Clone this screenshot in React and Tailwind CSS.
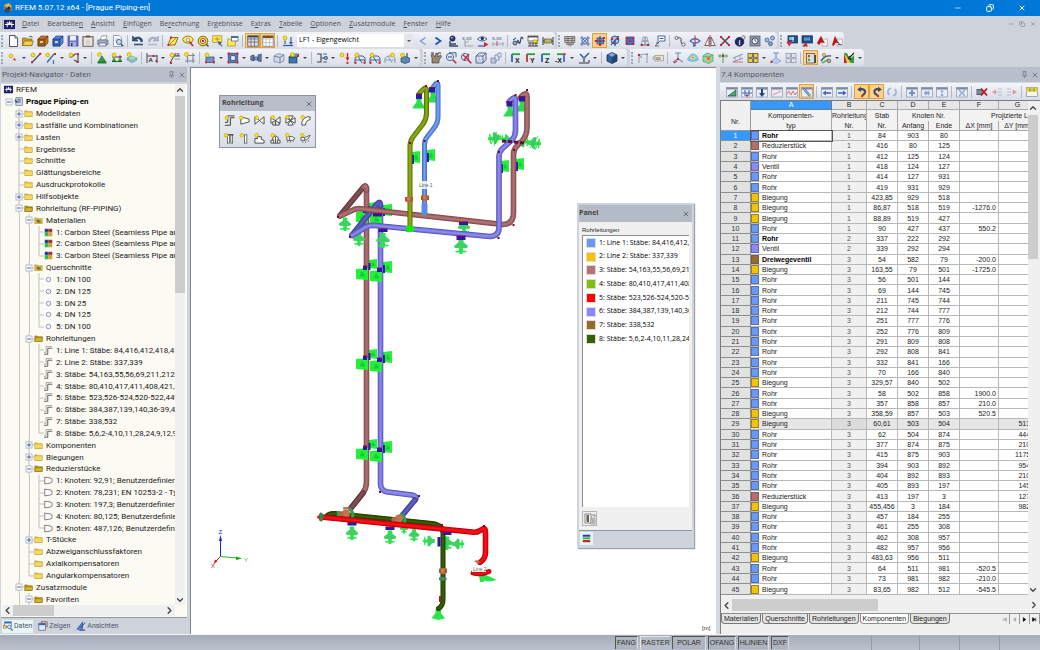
import React from "react";
import { Pin, X, Minus, Copy, ChevronLeft, ChevronRight, ChevronUp, ChevronDown } from "lucide-react";

/* ---------- drawing helpers for 12x12 icons ---------- */
const L = (d, c = "#333", w = 1) => <path d={d} fill="none" stroke={c} strokeWidth={w} />;
const F = (d, c, s = "none", w = 0.6) => <path d={d} fill={c} stroke={s} strokeWidth={w} />;
const R = (x, y, w, h, c, s = "none") => <rect x={x} y={y} width={w} height={h} fill={c} stroke={s} strokeWidth={0.7} />;
const C = (x, y, r, c, s = "none") => <circle cx={x} cy={y} r={r} fill={c} stroke={s} strokeWidth={0.8} />;
const Sun = (x = 3, y = 3) => C(x, y, 1.9, "#ffe326", "#c7a600");
const Red = (x, y) => R(x - 1, y - 1, 2, 2, "#d3202a");
const T = (x, y, s, c = "#333", size = 5) => (
  <text x={x} y={y} fontSize={size} fill={c} fontFamily="Liberation Sans, sans-serif" fontWeight="bold">{s}</text>
);
const axes = (label, a, b) => (
  <>{L("M2 10V2", a, 1.8)}{L("M2 2.2H10", b, 1.8)}{T(5, 10.5, label, "#222", 7)}</>
);
const sheet = (inner) => <>{R(0.5, 1.5, 11, 9.5, "#e9edf4", "#8d97a8")}{R(0.5, 1.5, 11, 2, "#7d899e")}{inner}</>;
const frame = (c = "#3f5f96") => <>{L("M1 11V6L4 4H9L11 6V11M1 8H11M4 4L8 11", c)}</>;
const hex = (x, y, c, s) => F(`M${x} ${y - 3}L${x + 3} ${y - 1.5}V${y + 2}L${x} ${y + 3.5}L${x - 3} ${y + 2}V${y - 1.5}Z`, c, s);

const ICONS = {
  new: <>{F("M2.5 .5H8L10.5 3V11.5H2.5Z", "#fff", "#444", 0.9)}{L("M8 .5V3H10.5", "#444", 0.8)}</>,
  open: <>{F("M.5 3H4.5L5.5 4H10V10.5H.5Z", "#c99a1c", "#7c5a08")}{F("M2.5 6H11.5L9.5 10.5H.5Z", "#f5d04a", "#7c5a08")}{L("M7 2Q9 .5 10.5 2.5", "#4c9c3c", 1.2)}</>,
  caseBrown: <>{F("M1 4L4 1H11V8L8 11H1Z", "#c47a2a", "#5f3205")}{F("M1 4H8V11H1Z", "#9a5a18", "#5f3205")}{R(3, 6, 3, 2, "#f0c890")}{L("M8 4L11 1", "#5f3205")}</>,
  caseBlue: <>{F("M1 4L4 1H11V8L8 11H1Z", "#5b88d8", "#122f72")}{F("M1 4H8V11H1Z", "#3560b8", "#122f72")}{R(3, 6, 3, 2, "#c6d8f6")}{L("M8 4L11 1", "#122f72")}</>,
  save: <>{R(1, 1, 10, 10, "#6b74c4", "#3d4590")}{R(3, 1, 6, 4.5, "#eef0fa")}{R(3, 7, 6, 4, "#a9aee0")}{R(4, 8, 1.5, 3, "#333a7a")}</>,
  clip: <>{R(0.8, 1.5, 10.4, 10, "#b9a998", "#6c5c4c")}{R(2.2, 3, 7.6, 7.5, "#f7f4ef")}{R(4, 0.5, 4, 2, "#6c5c4c")}{L("M3.5 5H8.5M3.5 7H8.5M3.5 9H8.5", "#999", 0.7)}</>,
  print: <>{F("M3 5L5 .8H10L8.5 5Z", "#fff", "#667")}{F("M.8 5H11V9.5H.8Z", "#aab3c6", "#4d566c")}{R(2, 8, 7, 3, "#eef", "#4d566c")}{C(9.5, 6.5, 0.7, "#2a6")}</>,
  preview: <>{F("M1.5 .5H7L9.5 3V11.5H1.5Z", "#fff", "#667")}{L("M3 4H7M3 6H6", "#999", 0.7)}{C(7, 7, 2.6, "#bcd8f3", "#345c94")}{L("M9 9L11.3 11.3", "#345c94", 1.5)}</>,
  undo: <>{F("M.5 1V6H6L4 4Q8 2.5 9 7Q11 7 10.5 5Q8.5 .5 2.5 2.8Z", "#31547e", "#1f3a5c")}{L("M2 9.5H11", "#31547e", 1.6)}</>,
  redo: <>{F("M11.5 1V6H6L8 4Q4 2.5 3 7Q1 7 1.5 5Q3.5 .5 9.5 2.8Z", "#aebacb", "#8ea0b6")}{L("M1 9.5H10", "#aebacb", 1.6)}</>,
  plate: <>{F("M1 10L4 2.5H11L8 10Z", "#ffe95a", "#8a5b12", 0.9)}{L("M3 9L9 3", "#8a5b12", 0.7)}{Red(1.5, 10)}{Red(4, 2.5)}</>,
  ellipse: <>{F("M.5 4.5Q2 .8 6 1Q11 1.5 11 5Q10 9 5 8Q1 7.5.5 4.5", "#ffe95a", "#8a7412", 0.9)}{C(6, 5, 1.6, "#fff", "#888")}{L("M7.5 6.5L11 11", "#d3202a", 1.6)}</>,
  target: <>{C(6, 6, 4.8, "#ffe326", "#5a4a00")}{C(6, 6, 2.6, "#fff", "#b02020")}{Red(6, 6)}{L("M9 9L11.5 11.5", "#444", 1.2)}</>,
  selBox: <>{R(0.8, 0.8, 9, 6.5, "#ffe95a", "#a58a10")}{L("M2.5 4H8M5.2 2V6.5", "#a58a10", 0.8)}{F("M6 6L10 7.5L8.5 8.5L10.5 11L9.5 11.5L7.7 9.2L6.8 10.5Z", "#345c94")}</>,
  layer: <>{R(0.8, 4, 7.5, 7, "#ffe95a", "#a58a10")}{R(4.5, 1.5, 6.5, 4.5, "#fff", "#345c94")}{R(4.5, 1.5, 6.5, 1.4, "#345c94")}</>,
  gridDark: <>{R(0.8, 0.8, 10.4, 10.4, "#dfe4ec", "#3d4656")}{L("M4 1V11M1 4H11M1 7H11M7.5 1V11", "#65718a", 0.9)}{R(0.8, 0.8, 10.4, 1.6, "#3d4656")}</>,
  gridLight: <>{R(0.8, 0.8, 10.4, 10.4, "#fbfcfe", "#66718a")}{L("M4 1V11M1 4H11M1 7.5H11M7.5 1V11", "#b4bdcc", 0.8)}{R(0.8, 0.8, 10.4, 2.2, "#8d4c1c")}</>,
  loadNew: <>{Sun(3, 3)}{L("M1 10.5H11", "#3b5fa8", 1.3)}{L("M3 5.5V9M9 2V8", "#3b5fa8", 1.2)}{F("M7 7H11L9 10Z", "#3b5fa8")}</>,
  prev: <>{L("M8.5 2.5L3.5 6L8.5 9.5", "#7f9fd4", 1.5)}</>,
  next: <>{L("M3.5 2.5L8.5 6L3.5 9.5", "#1b57c4", 1.8)}</>,
  lamp: <>{C(5.5, 3.5, 2.6, "#28447c", "#0b1c3e")}{C(4.8, 2.8, 0.8, "#cfe0ff")}{L("M3 6V11H11M3 9H9", "#33496e", 1.4)}</>,
  valGray: <>{T(0, 4.5, "x.xx", "#7e8796", 5)}{L("M3 5V11H11", "#a1a9b8", 1.2)}{L("M3 8L7 6", "#a1a9b8")}</>,
  eye: <>{F("M.5 4Q5 -.5 10 4Q5 8 .5 4", "#fff", "#28447c", 0.9)}{C(5.3, 3.6, 1.7, "#12306e")}{L("M1 11H8", "#3e62c4", 1.3)}{F("M7 7L11.5 9.5L7 12Z", "#d3202a")}</>,
  valBeam: <>{T(0, 4.5, "x.xx", "#7e8796", 5)}{L("M1 7V11M1 9H11M11 7V11", "#a1a9b8", 1.1)}{L("M5 6V11", "#c48")}</>,
  calc: <>{C(3, 8, 2, "#9ac", "#234")}{L("M5 8Q6 2 7 8Q8 10 9 3Q10 1 11 4", "#334a70", 1.2)}{L("M1 5L4 3", "#234")}</>,
  calcTab: <>{R(1, 1, 10, 5, "#fff", "#444")}{R(1, 1, 10, 1.5, "#555")}{L("M1 8H11M1 11H11M3 8V11M6 8V11M9 8V11", "#333", 0.9)}{R(6, 5, 4, 2.5, "#ffe326", "#a58a10")}</>,
  ruler: <>{L("M1 2V10M11 2V10M1 6H11", "#333", 1)}{R(2.5, 4, 7, 4, "#ffe95a", "#555")}{L("M4 4V8M6 4V8M8 4V8", "#555", 0.7)}</>,
  ladder: <>{R(0.8, 1.5, 10, 6, "#d0c8b8", "#555")}{L("M1 3.5H11M1 5.5H11M4 1.5V7.5M8 1.5V7.5", "#555", 0.7)}{F("M3 9H9L6 12Z", "#b9a080")}{L("M2 9H10", "#555")}</>,
  snow: <>{L("M1 3H11M1 9H11M3 1V11M9 1V11", "#4f66a4", 0.8)}{C(6, 6, 2.4, "#fff", "#27479c")}{L("M4 4L8 8M8 4L4 8", "#27479c", 0.7)}</>,
  nodesA: <>{R(3, 3, 6.5, 6, "#6f96d8", "#1f3f80")}{L("M1 6H11M6 1V11", "#1f3f80")}{Red(1.8, 6)}{Red(6, 10)}{Red(6, 6)}{Red(10, 3)}</>,
  nodesB: <>{C(6, 5, 4, "#a9c3ee", "#1f3f80")}{L("M2 10L10 1M6 5V11", "#1f3f80", 1.1)}{Red(3, 4)}{Red(9, 4)}</>,
  nodesC: <>{R(2, 2, 8, 7.5, "#4d6db4", "#1f3f80")}{Red(3, 3)}{Red(9, 3)}{Red(6, 6)}{Red(3, 9)}{Red(9, 9)}</>,
  nodesD: <>{F("M2 10L4 2H8L10 10Z", "#d9dfe9", "#7d899e")}{L("M1 10H11M3 6H9M6 2V10", "#7d899e")}{Red(3, 10)}{Red(9, 10)}</>,
  tag: <>{F("M4 1H11V6H6L4 8Z", "#fff", "#345c94", 0.9)}{L("M1 11L6 6M2 8H5M1 11H5", "#566a8e", 1)}{L("M5.5 3.5H9.5", "#345c94")}</>,
  path: <>{C(2.5, 3, 1.5, "#fff", "#444")}{L("M4 3Q8 2 7 6Q6.5 8 8.5 9", "#444")}{C(9.5, 9.5, 1.6, "#fff", "#444")}</>,
  rot: <>{F("M1 6Q6 1.5 11 6Q6 10.5 1 6", "none", "#4d6db4", 1.2)}{L("M6 .5V11.5", "#c03a3a", 1.1)}{F("M4 8L7 10.5L4 12Z", "#4d6db4")}</>,
  mirror: <>{F("M5 2V10.5H.8Z", "#fff", "#444", 0.8)}{F("M7 2V10.5H11.2Z", "#fff", "#444", 0.8)}{L("M6 0V12", "#d3202a", 0.9)}</>,
  redX: <>{L("M2 2L10 10M10 2L2 10", "#4b4b4b", 1.6)}{Red(2, 2)}{Red(10, 2)}{Red(2, 10)}{Red(10, 10)}{Red(6, 6)}</>,
  info: <>{C(5.5, 6.8, 4.3, "#1b2a66", "#0c1540")}{T(4.6, 9.6, "i", "#fff", 7)}{F("M7 2.5L9 .5L11.5 2L10 4.5Z", "#e8e8f4", "#333")}</>,
  docMag: <>{R(1, 1, 10, 10, "#8b99ae", "#4b5568")}{C(6, 6, 3, "#fff", "#234")}{L("M6 4V6L7.5 7", "#234", 0.8)}</>,
  cubes: <>{C(3, 5, 2, "#a9bfe2", "#3d5f9c")}{C(8.5, 3, 2, "#a9bfe2", "#3d5f9c")}{C(6.5, 8.7, 2, "#7f9fd0", "#3d5f9c")}</>,
  photo: <>{R(2, 0.8, 9.5, 7.2, "#1f4f8c", "#0d2a50")}{R(3, 2, 5, 3, "#7db4ec")}{L("M7 2V7", "#fff", 0.8)}{F("M.5 7L2 6.3L3.2 7L4.500 6.3L6 7.3L3.2 11.5Z", "#d92c2c")}</>,
  photo2: <>{R(1, 0.8, 10.4, 7.2, "#1f4f8c", "#0d2a50")}{R(3, 2.5, 6, 3, "#5d93cc")}{F("M1 11.5L5 7L7 11.5Z", "#c02b2b")}</>,
  pdf: <>{F("M6 4H11.5V11H6Z", "#f4f4f4", "#999")}{F("M1 8L5 .8L7 5L9 8L5 7.5L3 10Z", "#c1121c")}</>,
  pdf2: <>{F("M6 4H11.5V11H6Z", "#f3f3f3", "#999")}{F("M1 10L4 .8L6.5 6L9 9L5 7.5L2.5 11Z", "#c1121c")}{L("M7 9.500H10.500", "#345c94")}</>,

  node: <>{Sun(4, 4)}{Red(7.5, 7.5)}</>,
  line: <>{L("M2 10.5L10.5 1.5", "#444", 1.1)}{Sun(3, 3)}{Red(2, 10.3)}{Red(10.3, 1.8)}</>,
  memb: <>{L("M2 10.5L9 2", "#3f6fb0", 1.5)}{Sun(2.6, 3)}{Red(10, 2)}{T(7.5, 11.5, "I", "#28447c", 6)}</>,
  poly: <>{L("M1.5 5H4L7 2H10V10L6 8", "#444", 1.1)}{Sun(3, 3)}{Red(10, 2.2)}{Red(9.5, 10)}</>,
  support: <>{Sun(3.5, 2.5)}{F("M6 4L10 10H2Z", "#2f9c48", "#16602a")}{R(1.5, 10, 9, 1.5, "#1e7a35")}</>,
  suppLine: <>{L("M1 5H11", "#444")}{Sun(3, 3)}{F("M3 5L5 9H1Z", "#2f9c48")}{F("M9 5L11 9H7Z", "#2f9c48")}{Red(9, 4.6)}{R(1, 9, 10, 1, "#16602a")}</>,
  suppSurf: <>{Sun(3, 2.5)}{F("M1 6L6 4L11 6L6 9Z", "#a9d7b2", "#6aa")}{F("M1 8L6 11L11 8V6L6 9L1 6Z", "#8fbcd4", "#6aa")}</>,
  dim: <>{L("M1 1V11M11 3V11M1 4H11", "#444", 1)}{T(2.4, 10, "A", "#222", 6)}{Red(7.5, 4)}{Red(10.5, 9)}</>,
  dim2: <>{L("M1 11L5 4H11", "#444", 1)}{Sun(3, 3)}{T(5, 4, "xx", "#555", 5)}{Red(2, 11)}{L("M6 7H11", "#888", 0.8)}</>,
  gridHash: <>{L("M3.5 1V11M9 1V11M1 3.5H11M1 9H11", "#8089a0", 1.2)}{Sun(2.5, 2.5)}</>,
  surf: <>{R(2, 5, 8, 5.5, "#6f96c4", "#28447c")}{Sun(3, 3)}{Red(10, 10.3)}{Red(2, 10.3)}</>,
  opening: <>{R(1.2, 1.2, 9.6, 9.6, "#5d7cae", "#28447c")}{R(3.8, 3.8, 4.4, 4.4, "#eef", "#28447c")}{Red(1.6, 1.6)}{Red(10.4, 1.6)}{Red(10.4, 10.4)}{Red(1.6, 10.4)}</>,
  solid: <>{F("M.8 4L4 3V9L.8 8Z", "#5b7db8", "#234")}{F("M4.5 5H7.5V8H4.5Z", "#8fa9d2", "#234")}{F("M8 3L11.2 2V9.5L8 9Z", "#5b7db8", "#234")}</>,
  box: <>{F("M1 4L5 1.5L11 3V8.5L7 11L1 9.5Z", "#cfd9e8", "#5c6f90")}{L("M1 4L7 5.5L11 3M7 5.5V11", "#5c6f90", 0.8)}</>,
  boxSun: <>{R(1, 5, 8, 6, "#3e76a8", "#1a3f66")}{F("M1 5L4 2H11L9 5Z", "#6fa3cc", "#1a3f66")}{Sun(4.5, 2.6)}{Red(10, 4)}</>,
  beams: <>{L("M1 2H5V10H1M5 6H9", "#444", 1.1)}{C(9.8, 6, 1.7, "#7fb0e4", "#28447c")}{L("M7 2H11M7 10H11", "#444", 0.8)}</>,
  loadN: <>{Sun(3, 3)}{L("M8.5 1V6", "#d3202a", 1.4)}{F("M6.5 5.5H10.5L8.5 9Z", "#d3202a")}{Red(8.5, 10.8)}</>,
  loadM: <>{frame()}{Sun(3, 3)}{Red(1.5, 10.8)}{Red(10.5, 10.8)}</>,
  loadG: <>{frame("#8fa0bc")}{Sun(8.5, 3)}</>,
  loadBox: <>{F("M2 6L6 4.5L10.5 6V10L6 11.5L2 10Z", "#5b88b8", "#234")}{Sun(3.5, 3)}{L("M8 1V5", "#28447c", 1.2)}</>,
  hand: <>{F("M2 11V6L1 3L3 2L5 5L6 1L8 1.5V5L10.5 3L11.5 4.5L9 8V11Z", "#9c8672", "#3c3026")}{L("M1 1H4M8 1H11", "#333")}</>,
  zoomWin: <>{C(5, 5, 3.6, "#dcebfb", "#28447c")}{L("M8 8L11.3 11.3", "#d3202a", 1.6)}{L("M4 .8H11V5", "#345c94", 1)}{L("M3 5H7", "#28447c")}</>,
  zoomX: <>{C(5, 5, 3.6, "#dcebfb", "#28447c")}{L("M8 8L11.3 11.3", "#d3202a", 1.6)}{L("M3 3L9 8M9 2L4 8", "#d3202a", 1.3)}</>,
  wire: <>{L("M1 4H8V11H1ZM4 1H11V8M4 1L1 4M11 1L8 4M11 8L8 11", "#4f6798", 1)}{L("M4 1V8H11M4 8L1 11", "#9aa9c6", 0.7)}</>,
  wire2: <>{F("M1 6H6V11H1Z", "#bccbe4", "#4f6798")}{F("M5 3H9V8H5Z", "#dbe4f2", "#4f6798")}{F("M8 1H11V5H8Z", "#eef", "#4f6798")}</>,
  ax: axes("X", "#2b5fd0", "#26a046"),
  ay: axes("Y", "#c63030", "#26a046"),
  az: axes("Z", "#2b5fd0", "#26a046"),
  axn: <>{T(0, 10.5, "-X", "#222", 7)}{L("M9 10V2", "#2b5fd0", 1.6)}{L("M2 2.2H8", "#26a046", 1.8)}{Red(9.5, 2)}</>,
  pick: <>{L("M1 11H11V8", "#333", 1)}{L("M2 2L6 6L11 1M6 6V10", "#31547e", 1.4)}{F("M4 5H8L6 9Z", "#4d86c8")}</>,
  globe: <><path d="M6 .5L11 3V9L6 11.5L1 9V3Z" fill="#2f5f9a" stroke="#12294a" strokeWidth="0.8" />{F("M6 6L11 3V9L6 11.5Z", "#1e4472")}{F("M2.500 2.600L6 1L9 2.600L6 4.500Z", "#8fb4dc")}</>,
  frameG: <>{L("M2 11V3L10 2V11M2 3L5 6", "#98a0b0", 1.1)}{Red(2, 3)}{C(10, 2.2, 1, "#6a8")}</>,
  label: <>{R(3, 3.5, 8.5, 5.5, "#eadfd0", "#998")}{T(4, 8, "00", "#666", 4)}{L("M.5 5H3M.5 7H3", "#999")}</>,
  isoA: <>{L("M6 1V7M3 1H9M1 10L6 7L11 10", "#6f8fc4", 1.1)}{Red(6, 7)}{L("M2 11L5 9", "#c63030", 1.2)}</>,
  rainbow: <>{F("M.5 8Q3 1.5 6 2Q10 2 11.5 8Q6 11 .5 8", "#8ac8ee", "#5aa")}{F("M3 6Q6 2 9 6Q6 8 3 6", "#f3e24c")}{F("M4.5 6Q6 4 7.5 6", "#e4583c")}</>,
  cubeG: <><path d="M1 4L5 1L11 3V9L7 11.500L1 9.500Z" fill="#a3cf9c" stroke="#4a8" strokeWidth="0.8" />{C(6.5, 6.5, 2.2, "#e7a54c")}{C(6.5, 6.5, 1.2, "#e7553c")}{L("M1 4L7 5L11 3", "#4a6", 0.8)}</>,
  cross: <>{L("M1 4H11M6 1V11", "#78b084", 1.4)}{Red(6, 3.8)}{L("M3 2V6M9 2V6", "#78b084")}</>,
  slope: <>{L("M1 10L11 6M1 6L11 2", "#8f9cb4", 1.1)}{L("M1 10L11 10", "#c66", 0.9)}{L("M3 5V9M8 3V7", "#8f9cb4", 0.8)}</>,
  four: <>{R(1, 1.5, 4.4, 3.8, "#f3cd3c", "#444")}{R(6.6, 1.5, 4.4, 3.8, "#f3cd3c", "#444")}{R(1, 6.7, 4.4, 3.8, "#f3cd3c", "#444")}{R(6.6, 6.7, 4.4, 3.8, "#f3cd3c", "#444")}</>,
  isoB: <>{L("M6 1V6M3 1H9", "#6f8fc4", 1.2)}{F("M1 9L6 6L11 9L6 11.5Z", "#b9cfee", "#6f8fc4")}{Red(1.5, 10)}</>,
  fourG: <>{R(1, 1.5, 4.4, 4, "#dce1ea", "#8a94a8")}{R(6.6, 1.5, 4.4, 4, "#dce1ea", "#8a94a8")}{R(1, 6.7, 4.4, 4, "#dce1ea", "#8a94a8")}{R(6.6, 6.7, 4.4, 4, "#dce1ea", "#8a94a8")}</>,
  result: <>{R(1.5, 1.5, 8, 9.5, "#d6dbe4", "#444")}{R(3, 3, 1.8, 2, "#c33")}{R(3, 5, 1.8, 2, "#dc3")}{R(3, 7, 1.8, 2, "#3a4")}{R(9.5, 3, 1.5, 8, "#444")}</>,
  result2: <>{L("M1 9Q5 3 11 4", "#31547e", 1.4)}{C(4, 3, 1.6, "#f3cd3c", "#985")}{L("M2 11L9 7", "#6a5", 1.5)}{C(9, 9, 1.8, "#b8a890", "#665")}</>,
  flag: <>{R(1, 1, 10, 10, "#2f9c48")}{F("M1 1V11H4Z", "#d3202a")}{F("M1 1L4 11H8Z", "#f3cd3c")}{F("M4 1H11V3L7 7Z", "#fff")}{L("M5 7L11 1M6 4L8 8", "#222", 1.1)}</>,

  t1: sheet(<>{F("M2 10L10 4V10Z", "#41b35a", "#226")}</>),
  t2: sheet(<>{L("M1 7H11M4 4V10M8 4V10", "#3e62c4", 1)}{Red(6, 9.5)}</>),
  t3: sheet(<>{L("M6 3V9", "#28447c", 2)}{F("M3 7H9L6 11Z", "#28447c")}</>),
  t4: sheet(<>{L("M2 9L10 5", "#d88", 1)}</>),
  t5: sheet(<>{L("M1 8L3 5L5 9L7 5L9 9L11 6", "#e07070", 1)}</>),
  t6: sheet(<>{L("M3 3L9 10", "#3e6ea8", 2.4)}{L("M3 3L9 10", "#dfeaf8", 0.8)}</>),
  t7: sheet(<>{L("M4 7H10", "#3e62c4", 1.6)}{F("M1.5 7L5 4.5V9.5Z", "#3e62c4")}</>),
  t8: sheet(<>{L("M2 7H8", "#3e62c4", 1.6)}{F("M10.5 7L7 4.5V9.5Z", "#3e62c4")}</>),
  t9: <>{L("M4 3.200H6Q9.500 3.500 9 6.500Q8.500 8.500 6.500 9", "#394b6c", 2.2)}{F("M5 .8L1 3.4L5 6Z", "#394b6c")}{C(6.2, 10, 1.2, "#d3202a")}</>,
  t10: <>{L("M8 3.200H6Q3 3.500 3.500 6.500Q4 8.500 6.500 9", "#394b6c", 2.2)}{F("M7 .8L11 3.4L7 6Z", "#394b6c")}{C(7, 10, 1.2, "#d3202a")}</>,
  t11: <>{L("M3 9Q0 4 5 2M9 3Q12 8 7 10", "#9fb4d6", 1.8)}</>,
  t12: sheet(<>{L("M6 4V10M3 7H9", "#6f8fd4", 2)}</>),
  t13: sheet(<>{L("M4 5L8 9M8 5L4 9M3 7H9", "#8fa6dc", 1.4)}</>),
  t14: sheet(<>{C(6, 5.5, 1.3, "#8fa6dc")}{C(6, 9, 1.3, "#8fa6dc")}</>),
  t15: sheet(<>{L("M3 4L9 10M9 4L3 10", "#8fa6dc", 1.4)}</>),
  t16: <>{R(0.5, 3, 6, 6, "#555e70")}{L("M1 5H6M1 7H6", "#ccd", 0.7)}{L("M5 2.5L11 9.5M11 2.5L5 9.5", "#b01822", 1.8)}</>,
  t17: <>{L("M5 6H11M7 3H11M7 9H11", "#b9bfca", 1.2)}{F("M1 6L5 3.5V8.5Z", "#e49494")}</>,
  t18: <>{L("M1 6H7M1 3H5M1 9H5", "#b9bfca", 1.2)}{F("M11 6L7 3.5V8.5Z", "#e49494")}</>,
  t19: <>{R(0.5, 1.5, 11, 9, "#f7f7e4", "#889")}{R(0.5, 1.5, 11, 4, "#d8d23a")}{L("M4 1.5V6M8 1.5V6", "#776", 0.8)}</>,

  p1: <>{L("M1 11.2H7V3H11.5M1 8H4V1H11.5", "#333", 1)}{Sun(3, 3)}</>,
  p2: <>{F("M2 2L11 4.5V7.5L2 10Z", "#fff", "#333", 0.9)}{Sun(2.5, 3)}</>,
  p3: <>{F("M1 2L6 6L1 10ZM11 2L6 6L11 10Z", "#fff", "#333", 0.9)}{Sun(3, 3)}</>,
  p4: <>{F("M1 3L6 6L1 9ZM11 2L6 6L11 9Z", "#fff", "#333", 0.9)}{L("M6 6V11H3V8M6 11H10V8", "#333", 0.9)}{Sun(3, 2.5)}</>,
  p5: <>{F("M1 3L6 6L1 9ZM11 3L6 6L11 9Z", "#fff", "#333", 0.9)}{F("M3 1H9L6 6ZM3 11H9L6 6Z", "#fff", "#333", 0.9)}{Sun(2.5, 2.5)}</>,
  p6: <>{F("M2 11V8Q3 3 8 2H11L11 5Q6 6 6 11Z", "#fff", "#333", 0.9)}{Sun(3, 2.5)}</>,
  p7: <>{R(4, 2, 2, 9, "#fff", "#333")}{R(7.5, 2, 2, 9, "#fff", "#333")}{L("M3.5 2H10.5", "#333")}{Sun(2.2, 2.5)}</>,
  p8: <>{R(6, 2, 2.6, 9, "#fff", "#333")}{Sun(3, 2.5)}</>,
  p9: <>{F("M1 11V6H4V4H8V7L11 8V11Z", "#fff", "#333", 0.9)}{Sun(3, 2.5)}</>,
  p10: <>{F("M1 11V8H3V5L6 3L9 5V8H11V11Z", "#fff", "#333", 0.9)}{L("M6 4V11M4 7V11M8 7V11", "#333", 0.9)}{Sun(3, 2.5)}</>,
  p11: <>{F("M2 4H8L11 6L8 8H2Z", "#fff", "#333", 0.8)}{L("M3 9V10.5M6 9V10.5M9 8V9.5M5 4V8", "#333", 0.8)}{Sun(2.5, 2.5)}</>,
  p12: <>{F("M1 5H5L11 2.5L9 6L5 8H1Z", "#fff", "#333", 0.8)}{L("M3 9V10.5M6 9V10.5M9 8V9.5M5 5V8", "#333", 0.8)}{Sun(2.5, 2.5)}</>,

  rfem: <>{R(0, 1, 12, 10, "#1b1c6b")}{L("M1 6H11M3.5 3V9M8.5 3V9", "#fff", 1)}{F("M4 6H8L6 2Z", "#fff")}</>,
  folder: <>{F("M1 2.5H4.5L5.5 3.5H11V10H1Z", "#e9bd2c", "#9a7a14")}{R(1.5, 4.6, 9, 4.8, "#f8d95c")}</>,
  folderOpen: <>{F("M1 2.5H4.5L5.5 3.5H11V10H1Z", "#b9930f", "#7c620a")}{F("M2 5H11.5L10.5 10H1Z", "#dbb32a", "#7c620a")}</>,
  folderMat: <>{F("M1 2.5H4.5L5.5 3.5H11V10H1Z", "#e9bd2c", "#9a7a14")}{C(6, 7, 2, "#d8432e")}{R(6, 6, 3, 3, "#3a9c48")}{R(3.4, 5, 2, 2.4, "#3a5cc8")}</>,
  mat: <>{R(1, 1, 5, 5, "#3456b8")}{R(6, 1, 5, 5, "#c03c34")}{R(1, 6, 5, 5, "#28c046")}{R(6, 6, 5, 5, "#d8a02c")}{L("M1 3H11M3 1V6", "#222", 0.6)}</>,
  ring: <>{R(0, 0, 12, 12, "#fff")}{C(6, 6, 3, "#fff", "#3c4a8c")}</>,
  pipe: <>{L("M0 11H5V3H11", "#333", 1)}{L("M0 8.5H2.8V.8H11", "#777", 0.8)}</>,
  cone: <>{F("M1 1.5L8 2.5Q11 3 11 6Q11 9 8 9.5L1 10.5Z", "#fff", "#444", 0.9)}</>,
  doc: <>{R(2.5, 1, 8.5, 10, "#cfd9ea", "#33486e")}{L("M4 3H9M5 5H9M5 7H9", "#33486e", 0.9)}{F("M.5 3L6 6.5L2.5 8Z", "#28447c")}</>,
  data: <>{R(2, 1, 8, 6, "#fff", "#36c")}{R(2, 1, 8, 2, "#36c")}{C(7.5, 7, 2.2, "#cfe4fa", "#345c94")}{L("M9 9L11.5 11.5", "#345c94", 1.3)}{R(0.5, 5, 3.5, 3.5, "#f3cd3c", "#975")}</>,
  show: <>{R(1, 3, 8, 8, "#dfe9f8", "#28447c")}{R(1, 3, 8, 2, "#3560b8")}{L("M4 3V1H11V7H9", "#8a4a3a", 1)}</>,
  views: <>{F("M1 10L8 1V10Z", "#5a82d8", "#1f3f90")}{L("M5 8L11 2M4 11H11", "#1f3f90", 1.2)}</>,
  bars: <>{R(1, 1, 10, 2.6, "#2a34c4")}{R(1, 4.4, 10, 2.6, "#2fbf3c")}{R(1, 8, 10, 3, "#c42a34")}</>,
  panelIco: <>{R(1, 1, 6, 9, "#fff", "#555")}{R(2.5, 2, 2.5, 7, "#6a5a48")}{R(7, 5, 4, 6, "#ddd", "#888")}{L("M8 2H11V4M8 7H10M8 9H10", "#555", 0.7)}</>,
};

function Icon({ name, className = "size-3" }) {
  return <svg viewBox="0 0 12 12" className={`block shrink-0 ${className}`} aria-hidden="true">{ICONS[name]}</svg>;
}

/* ---------- toolbars ---------- */
function ToolButton({ name, active }) {
  return (
    <button
      type="button"
      aria-label={name}
      className={`flex h-[15px] w-[15px] shrink-0 items-center justify-center ${active ? "border border-[#e0a040] bg-[#ffd289]" : ""}`}
    >
      <Icon name={name} />
    </button>
  );
}

function Tools({ items }) {
  return items.split(" ").map((it, i) => {
    if (it === "|") return <span key={i} className="flex w-[5px] shrink-0 justify-center"><span className="h-3 w-px bg-[#b3bac8]" /></span>;
    if (it === "v")
      return (
        <button key={i} type="button" aria-label="Mehr" className="flex w-2 shrink-0 items-center justify-center">
          <svg viewBox="0 0 4 2" className="h-[2px] w-1"><path d="M0 0H4L2 2Z" fill="#444" /></svg>
        </button>
      );
    const active = it.startsWith("*");
    return <ToolButton key={i} name={active ? it.slice(1) : it} active={active} />;
  });
}

function Strip({ children, className = "" }) {
  return (
    <div role="toolbar" className={`flex h-full shrink-0 items-center rounded-r-sm bg-linear-to-b from-[#f1f3f8] to-[#d9dde7] ${className}`}>
      <span className="mr-[2px] ml-px flex h-3 w-[2px] shrink-0 flex-col justify-between border-l-2 border-dotted border-[#9fa7b6]" />
      {children}
    </div>
  );
}

/* ---------- navigator tree: label, depth, node kind, icon ---------- */
const TREE = [
  ["RFEM", 0, "", "rfem"],
  ["Prague Piping-en", 1, "-", "doc"],
  ["Modelldaten", 2, "+", "folder"],
  ["Lastfälle und Kombinationen", 2, "+", "folder"],
  ["Lasten", 2, "+", "folder"],
  ["Ergebnisse", 2, "t", "folder"],
  ["Schnitte", 2, "t", "folder"],
  ["Glättungsbereiche", 2, "t", "folder"],
  ["Ausdruckprotokolle", 2, "t", "folder"],
  ["Hilfsobjekte", 2, "+", "folder"],
  ["Rohrleitung (RF-PIPING)", 2, "-", "folderOpen"],
  ["Materialien", 3, "-", "folderMat"],
  ["1: Carbon Steel (Seamless Pipe and Tube)", 4, "t", "mat"],
  ["2: Carbon Steel (Seamless Pipe and Tube)", 4, "t", "mat"],
  ["3: Carbon Steel (Seamless Pipe and Tube)", 4, "e", "mat"],
  ["Querschnitte", 3, "-", "folderMat"],
  ["1: DN 100", 4, "t", "ring"],
  ["2: DN 125", 4, "t", "ring"],
  ["3: DN 25", 4, "t", "ring"],
  ["4: DN 125", 4, "t", "ring"],
  ["5: DN 100", 4, "e", "ring"],
  ["Rohrleitungen", 3, "-", "folderOpen"],
  ["1: Line 1: Stäbe: 84,416,412,418,414", 4, "t", "pipe"],
  ["2: Line 2: Stäbe: 337,339", 4, "t", "pipe"],
  ["3: Stäbe: 54,163,55,56,69,211,212,251", 4, "t", "pipe"],
  ["4: Stäbe: 80,410,417,411,408,421,422", 4, "t", "pipe"],
  ["5: Stäbe: 523,526-524,520-522,449", 4, "t", "pipe"],
  ["6: Stäbe: 384,387,139,140,36-39,41", 4, "t", "pipe"],
  ["7: Stäbe: 338,532", 4, "t", "pipe"],
  ["8: Stäbe: 5,6,2-4,10,11,28,24,9,12,95", 4, "e", "pipe"],
  ["Komponenten", 3, "+", "folder"],
  ["Biegungen", 3, "+", "folder"],
  ["Reduzierstücke", 3, "-", "folderOpen"],
  ["1: Knoten: 92,91; Benutzerdefiniert", 4, "t", "cone"],
  ["2: Knoten: 78,231; EN 10253-2 - Typ", 4, "t", "cone"],
  ["3: Knoten: 197,3; Benutzerdefiniert", 4, "t", "cone"],
  ["4: Knoten: 80,125; Benutzerdefiniert", 4, "t", "cone"],
  ["5: Knoten: 487,126; Benutzerdefiniert", 4, "e", "cone"],
  ["T-Stücke", 3, "+", "folder"],
  ["Abzweiganschlussfaktoren", 3, "t", "folder"],
  ["Axialkompensatoren", 3, "t", "folder"],
  ["Angularkompensatoren", 3, "e", "folder"],
  ["Zusatzmodule", 2, "-", "folderOpen"],
  ["Favoriten", 3, "-", "folderOpen"],
];

function Guide({ on }) {
  return <span className="flex w-[10px] shrink-0 justify-center self-stretch">{on && <span className="w-px bg-[#c4c4be]" />}</span>;
}

function Branch({ kind, level }) {
  const box = kind === "+" || kind === "-";
  return (
    <svg viewBox="0 0 10 12" className="h-3 w-[10px] shrink-0" aria-hidden="true">
      <path d={level === 1 ? "M5 6H10" : kind === "e" ? "M5 0V6H10" : "M5 0V12M5 6H10"} fill="none" stroke="#c0c0ba" />
      {box && <rect x="2" y="3" width="6" height="6" fill="#fff" stroke="#a4aebf" strokeWidth="0.8" />}
      {box && <path d={kind === "+" ? "M3 6H7M5 4V8" : "M3 6H7"} stroke="#4a639c" strokeWidth="1" />}
    </svg>
  );
}

function Navigator() {
  return (
    <aside className="flex w-[190px] shrink-0 flex-col bg-[#cfd3dc] pr-[3px] pl-px">
      <DockTitle>Projekt-Navigator - Daten</DockTitle>
      <div className="mt-[2px] flex min-h-0 flex-1 flex-col border-b border-[#8f96a3] bg-[#fcfbf3] pl-px">
        <div className="flex min-h-0 flex-1">
          <ul className="flex min-w-0 flex-1 flex-col overflow-hidden text-[8px] text-[#222]">
            {TREE.map(([label, depth, kind, icon], i) => (
              <li key={i} className="flex min-h-0 flex-1 items-center pl-[2px] whitespace-nowrap">
                {depth > 1 && <Guide />}
                {depth > 2 && <Guide on />}
                {depth > 3 && <Guide on />}
                {depth > 0 && <Branch kind={kind} level={depth} />}
                <Icon name={icon} className="mr-[3px] size-[9px]" />
                <span className={`leading-[11px] ${depth === 1 ? "font-bold text-black" : ""}`}>{label}</span>
              </li>
            ))}
          </ul>
          <div className="mr-[2px] flex w-[10px] shrink-0 flex-col items-center bg-[#f0f0f0]">
            <ChevronUp className="my-px size-[10px] text-[#444]" strokeWidth={3} />
            <div className="h-[197px] w-full bg-[#cdcdcd]" />
            <ChevronDown className="mt-auto size-[10px] text-[#444]" strokeWidth={3} />
          </div>
        </div>
        <div className="mr-3 mb-px flex h-[11px] items-center bg-[#f0f0f0]">
          <ChevronLeft className="size-[11px] text-[#444]" strokeWidth={3} />
          <div className="h-full w-[41px] bg-[#cdcdcd]" />
          <ChevronRight className="ml-auto size-[11px] text-[#444]" strokeWidth={3} />
        </div>
      </div>
      <div role="tablist" className="flex h-4 items-center gap-1 px-px text-[7px] text-[#4b5467]">
        <button role="tab" aria-selected="true" type="button" className="flex h-[13px] items-center gap-px bg-[#e9f4f6] px-px">
          <Icon name="data" className="size-[10px]" />Daten
        </button>
        <button role="tab" type="button" className="flex items-center gap-px px-px"><Icon name="show" className="size-[10px]" />Zeigen</button>
        <button role="tab" type="button" className="flex items-center gap-px px-px"><Icon name="views" className="size-[10px]" />Ansichten</button>
      </div>
    </aside>
  );
}

function DockTitle({ children }) {
  return (
    <div className="flex h-[15px] shrink-0 items-center bg-[#b9bfca] px-px text-[8px] text-[#555b66]">
      <span className="flex-1 truncate">{children}</span>
      <button type="button" aria-label="Anheften" className="mr-[3px]"><Pin className="size-[7px]" /></button>
      <button type="button" aria-label="Schließen"><X className="size-2" /></button>
    </div>
  );
}

/* ---------- 3D model ---------- */
const Pipe = ({ d, dark, mid, light, w = 5.6 }) => (
  <g fill="none" strokeLinecap="round" strokeLinejoin="round">
    <path d={d} stroke={dark} strokeWidth={w} />
    <path d={d} stroke={mid} strokeWidth={w * 0.76} />
    <path d={d} stroke={light} strokeWidth={w * 0.32} />
  </g>
);

const Foot = ({ x, y, r = 0, s = 1 }) => (
  <g transform={`translate(${x} ${y}) rotate(${r}) scale(${s})`}>
    <path d="M-2.500-6H2.500V-2.500L6.500 .5V2.500L2 3V5.500L6 6L5 7.200L1.500 7.500V9H-1.500V7.500L-5 7.200L-6 6L-2 5.500V3L-6.500 2.500V.5L-2.500-2.500Z" fill="#2be44a" />
    <path d="M-6.500 1L-2.500-2.500H2.500L6.500 1L6 3H-6Z" fill="#3ed065" />
  </g>
);

const Plate = ({ x, y, w = 12, h = 12 }) => (
  <g>
    <path d={`M${x} ${y + 1}L${x + w} ${y}V${y + h}L${x} ${y + h - 1}Z`} fill="#22f03a" />
    <path d={`M${x + w / 2} ${y + h * 0.25}L${x + w * 0.8} ${y + h * 0.7}H${x + w * 0.3}Z`} fill="#12cc34" />
  </g>
);

const Clamp = ({ x, y, w = 9, h = 4 }) => (
  <g>
    <rect x={x - w / 2} y={y - h / 2} width={w} height={h} fill="#2a18a8" />
    <path d={`M${x - w / 2} ${y - h / 2}h${w}`} stroke="#8a1030" strokeWidth="1" />
  </g>
);

const Joint = ({ x, y }) => (
  <g fill="#c06a40">
    <circle cx={x} cy={y} r="3.2" />
    <rect x={x - 4} y={y - 2.5} width="2" height="4.5" fill="#a85830" />
    <rect x={x + 2} y={y - 2.5} width="2" height="4.5" fill="#a85830" />
    <circle cx={x - 0.7} cy={y - 0.8} r="1.2" fill="#d4845c" />
  </g>
);

const BR = { dark: "#7c4a4e", mid: "#9a5d60", light: "#b07274" };
const BRD = { dark: "#5e3638", mid: "#74444a", light: "#835054" };
const PU = { dark: "#5452b8", mid: "#7371d8", light: "#8c8af0" };
const PUD = { dark: "#403e96", mid: "#5250ae", light: "#6260be" };
const NODES = [[426, 86], [438, 81], [515.5, 95], [527, 90], [410, 143], [424.5, 141], [499, 152], [514, 150], [338, 217], [350, 237], [513.5, 225], [498.5, 238], [380, 492], [419, 496], [442, 525], [484, 526]];

function Model() {
  return (
    <svg viewBox="191 68 525 566" preserveAspectRatio="xMinYMin meet" className="block h-[566px] w-[525px] shrink-0" role="img" aria-label="3D-Modell">
      {[[419, 103], [433, 97], [510, 111], [522, 106]].map(([x, y], i) => (
        <path key={i} d={`M${x - 2.5} ${y - 7}H${x + 2.5}V${y - 1}L${x + 7} ${y + 5.5}H${x - 7}L${x - 2.5} ${y - 1}Z`} fill="#2fdc4c" />
      ))}
      {[[411, 151], [426, 149], [500, 160], [515, 158]].map(([x, y], i) => (
        <g key={i}><Plate x={x + 1} y={y} w={8} h={12} /><rect x={x} y={y + 4} width="3" height="9" fill="#2a18a8" /></g>
      ))}
      <Foot x={496} y={138} r={85} s={0.9} /><Foot x={533} y={143} r={-85} s={0.9} /><Foot x={507} y={139} r={90} s={0.7} /><Foot x={522} y={142} r={-90} s={0.8} />
      <path d="M491 144L497 132M494 146L499 134M530 148L538 136M535 150L540 139" stroke="#22c83c" strokeWidth=".8" />
      {[-57, 0, 90, 180].map((o) => (
        <g key={o}>
          <Plate x={369} y={259 + o} w={8} h={10} />
          <Plate x={383} y={261 + o} w={9} h={12} />
        </g>
      ))}
      <Pipe d="M366.5 188V482Q366.5 488 363 493L351 508" {...BR} />
      <Pipe d="M363 493L351 508" {...BRD} />
      <Pipe d="M340 215.500L363.500 187" {...BRD} />
      <Pipe d="M363.500 187Q366.500 184 366.500 190" {...BR} />
      <Pipe d="M380.500 206V484Q380.500 491 388 492L412 495Q418 496 415 500" {...PU} />
      <Pipe d="M415 500L401 517" {...PUD} />
      {[-57, 0, 90, 180].map((o) => (
        <g key={o}>
          <Plate x={356} y={268 + o} />
          <Plate x={370} y={270 + o} />
          <Clamp x={365} y={268 + o} w={4} h={4} />
          <Clamp x={379.500} y={270 + o} w={5} h={4} />
          <rect x="383" y={265 + o} width="2" height="8" fill="#2a18a8" />
          <rect x="368.500" y={263 + o} width="2" height="7" fill="#2a18a8" />
        </g>
      ))}
      <Pipe d="M352 235L377 204Q380.500 200 380.500 206" {...PUD} />
      <Foot x={345} y={223} s={0.9} /><Foot x={359} y={238} s={0.9} /><Foot x={383} y={239} /><Foot x={464} y={226} s={0.9} />
      <Pipe d="M520 98Q527 90 527 97V128Q527 135 522 141L516 147Q513.500 150 513.500 155V213Q513.500 224 503 224.500L363 209Q357 208 353 210L340 216" {...BR} />
      <Foot x={461} y={245} />
      <Pipe d="M509 102Q515.500 94 515.500 101V130Q515.500 136 512 140L502 149Q499 152 499 157V228Q499 236 490 236.500L375 225.500Q370 225 366 227L352 235.500" {...PU} />
      <Pipe d="M419 94Q426.500 84 426.500 91V113Q426.500 119 423 124L413 137Q410 141 410 146V228" dark="#506a00" mid="#739200" light="#8cac14" w={5} />
      <Pipe d="M432 89Q438 79 438 86V117Q438 123 434 128L427 137Q424.500 140 424.500 145V212" dark="#3e69c0" mid="#5485dc" light="#74a2f0" w={5} />
      <rect x="421.500" y="203" width="6" height="12" rx="2" fill="#5a8ee4" />
      <rect x="406" y="226" width="8" height="6" fill="#10ea10" />
      <Joint x={409} y={199.500} /><Joint x={425} y={198} />
      <Clamp x={463.500} y={223.500} h={3} /><Clamp x={461} y={238} /><Clamp x={377.500} y={215} h={3} /><Clamp x={383} y={230.500} h={3} />
      <Clamp x={419} y={96.500} w={6} h={5} /><Clamp x={432} y={90} w={6} h={5} /><Clamp x={509.500} y={104} w={6} h={5} /><Clamp x={522} y={99} w={6} h={5} />
      <path d="M502 141L525 143" stroke="#5c1140" strokeWidth="3" strokeDasharray="4 2" />
      <rect x="418" y="181" width="14" height="8" fill="#fff" opacity=".85" />
      <text x="419" y="187" fontSize="5" fill="#555" fontFamily="Liberation Sans, sans-serif">Line 1</text>

      <Foot x={352} y={532} s={0.9} /><Foot x={390} y={536} s={0.9} /><Foot x={414} y={534} s={0.8} /><Foot x={404} y={528} s={0.6} />
      <Foot x={430} y={541} r={90} s={0.8} /><Foot x={457} y={544} r={-90} s={0.8} /><Foot x={447} y={542} s={0.9} />
      <path d="M435.500 609H441V613L445 618.500L438 620L431.500 618L435.500 613Z" fill="#2be44a" />
      <path d="M479 575H486L497 580L489 581.500L484 580.500V582H480Z" fill="#2be44a" />
      <Pipe d="M327 516Q329 513 335 513.500L432 523.500Q443 525 443 533V600Q443 606 438.500 608.500" dark="#1f3a00" mid="#2a4a02" light="#3c6208" w={5} />
      <path d="M349 509Q355 512 352 518M400 514Q407 517 404 523" fill="none" stroke="#3c9c50" strokeWidth="3" />
      <circle cx="346" cy="513.500" r="4" fill="#c07450" /><circle cx="341" cy="514" r="2.600" fill="#b06a44" /><rect x="343" y="507" width="6" height="2.500" rx="1" fill="#b87a58" />
      <circle cx="399" cy="518.500" r="4" fill="#c07450" /><circle cx="394" cy="519.500" r="2.600" fill="#b06a44" />
      <path d="M338 511V516" stroke="#3c9c50" strokeWidth="2.400" />
      <Pipe d="M321 517L472 532Q477 533 480 530.500L484 528.500Q485.500 529 485.500 533V552Q485.500 559 480 562.500" dark="#b80008" mid="#e0040c" light="#fa1018" />
      <ellipse cx="321" cy="517" rx="2.300" ry="4.500" fill="#2e8c46" /><circle cx="318.500" cy="517" r="1.500" fill="#e02020" />
      <Clamp x={352} y={524} h={3} /><Clamp x={390} y={528.500} h={3} /><Clamp x={447} y={533.500} h={3} /><Clamp x={439} y={542} w={3} h={9} />
      <Joint x={443} y={571} />
      <rect x="439" y="577" width="7.500" height="3.500" rx="1" fill="#3c8c58" />
      <path d="M440 596V602" stroke="#a02030" strokeWidth="2" />
      <Pipe d="M473 573Q480 575.500 489 571.500" dark="#b00008" mid="#d4040c" light="#ee1018" w={4.8} />
      <path d="M474 561Q478 559 480 562L478 564Z" fill="#b47450" />
      <rect x="472" y="565" width="14" height="7" fill="#fff" opacity=".9" />
      <text x="473" y="570.500" fontSize="5" fill="#666" fontFamily="Liberation Sans, sans-serif">Line 2</text>
      {NODES.map(([x, y], i) => <rect key={i} x={x - 1} y={y - 1} width="2" height="2" fill="#7c0c18" />)}

      <g fontFamily="Liberation Sans, sans-serif" fontSize="6">
        <path d="M220.500 556.500V540" stroke="#1a1aee" strokeWidth="1" /><path d="M219 541L220.500 535L222 541Z" fill="#1a1aee" />
        <path d="M220.500 556.500L237 558" stroke="#16c016" /><path d="M236 556.500L242 558.500L236 560Z" fill="#16a016" />
        <path d="M220.500 556.500L215 562" stroke="#e01616" /><path d="M217.500 561L213.500 564.500L215 559.500Z" fill="#e01616" />
        <text x="218.500" y="533.500" fill="#1a1aee">Z</text><text x="244" y="561.500" fill="#16c016">Y</text><text x="211" y="568" fill="#e01616">X</text>
      </g>
      <text x="702" y="630" fontSize="6" fill="#333" fontFamily="Liberation Sans, sans-serif">[m]</text>
    </svg>
  );
}

/* ---------- floating windows ---------- */
const LINES = [
  ["1: Line 1: Stäbe: 84,416,412,418", "bg-[#6699ff]"],
  ["2: Line 2: Stäbe: 337,339", "bg-[#f5c400]"],
  ["3: Stäbe: 54,163,55,56,69,211,212", "bg-[#bb7073]"],
  ["4: Stäbe: 80,410,417,411,408,421", "bg-[#7fbf00]"],
  ["5: Stäbe: 523,526-524,520-522", "bg-[#ff0000]"],
  ["6: Stäbe: 384,387,139,140,36-39", "bg-[#8888ff]"],
  ["7: Stäbe: 338,532", "bg-[#96692c]"],
  ["8: Stäbe: 5,6,2-4,10,11,28,24,9", "bg-[#336000]"],
];

function Palette() {
  return (
    <section className="absolute top-[27px] left-[28px] w-[97px] border border-[#8d949f] bg-linear-to-b from-[#f4f6fa] to-[#d9dde6]">
      <div className="flex h-[15px] items-center bg-[#b9bfca] pr-[2px] pl-[2px] font-['Open_Sans',sans-serif] text-[7px] font-bold text-[#444]">
        <h2 className="flex-1">Rohrleitung</h2>
        <button type="button" aria-label="Schließen"><X className="size-2" /></button>
      </div>
      <div className="grid h-9 grid-cols-6 place-items-center px-[2px]">
        {["p1", "p2", "p3", "p4", "p5", "p6", "p7", "p8", "p9", "p10", "p11", "p12"].map((n) => (
          <button key={n} type="button" aria-label={n}><Icon name={n} className="size-[11px]" /></button>
        ))}
      </div>
    </section>
  );
}

function LegendPanel() {
  return (
    <section className="absolute top-[135px] left-[386px] flex h-[345px] w-[117px] flex-col border-2 border-[#cfd4dc] bg-[#f0f0f0] shadow-[1px_1px_1px_#9aa1ab]">
      <div className="flex h-[17px] shrink-0 items-center bg-[#b5bbc6] pr-[2px] font-['Open_Sans',sans-serif] text-[7px] font-bold text-[#444]">
        <h2 className="flex-1">Panel</h2>
        <button type="button" aria-label="Schließen"><X className="size-2" /></button>
      </div>
      <div className="flex min-h-0 flex-1 flex-col px-[3px] pt-1">
        <h3 className="font-['Liberation_Sans',sans-serif] text-[6px] leading-[9px]">Rohrleitungen</h3>
        <div className="min-h-0 flex-1 overflow-hidden border-t border-l border-[#8d8d8d] bg-white">
          <ul className="flex h-[110px] flex-col">
            {LINES.map(([t, c]) => (
              <li key={t} className="flex flex-1 items-center gap-[3px] pl-[3px] font-['Open_Sans',sans-serif] text-[7px] whitespace-nowrap text-black">
                <span className={`size-[10px] shrink-0 border border-[#ddd] ${c}`} />{t}
              </li>
            ))}
          </ul>
        </div>
        <button type="button" aria-label="Optionen" className="my-1 flex size-[15px] shrink-0 items-center justify-center border border-[#b5b5b5]">
          <Icon name="panelIco" />
        </button>
      </div>
      <div className="flex h-4 shrink-0 items-center border-t border-[#8f96a3] bg-[#cfd3dc] pl-px">
        <button type="button" aria-label="Farben" className="flex size-[13px] items-center justify-center bg-[#e9f4f4]"><Icon name="bars" className="size-[9px]" /></button>
      </div>
    </section>
  );
}

/* ---------- component table ---------- */
const KIND = {
  Ro: ["Rohr", "bg-[#6699ff]"],
  Re: ["Reduzierstück", "bg-[#bb6a6e]"],
  Ve: ["Ventil", "bg-[#8888ff]"],
  Bi: ["Biegung", "bg-[#f5c400]"],
  Dr: ["Dreiwegeventil", "bg-[#96692c]"],
};
const ROWS = `Ro 1 84 903 80|Re 1 416 80 125|Ro 1 412 125 124|Ve 1 418 124 127|Ro 1 414 127 931|Ro 1 419 931 929|Bi 1 423,85 929 518|Bi 1 86,87 518 519 -1276.0|Bi 1 88,89 519 427|Ro 1 90 427 437 550.2|Ro 2 337 222 292|Ve 2 339 292 294|Dr 3 54 582 79 -200.0|Bi 3 163,55 79 501 -1725.0|Ro 3 56 501 144|Ro 3 69 144 745|Ro 3 211 745 744|Ro 3 212 744 777|Ro 3 251 777 776|Ro 3 252 776 809|Ro 3 291 809 808|Ro 3 292 808 841|Ro 3 332 841 166|Ro 3 70 166 840|Bi 3 329,57 840 502|Ro 3 58 502 858 1900.0|Ro 3 357 858 857 210.0|Bi 3 358,59 857 503 520.5|Bi 3 60,61 503 504 _ 513.0|Ro 3 62 504 874 _ 444.0|Ro 3 377 874 875 _ 210.0|Ro 3 415 875 903 _ 1175.0|Ro 3 394 903 892 _ 954.0|Ro 3 404 892 893 _ 210.0|Ro 3 405 893 197 _ 145.0|Re 3 413 197 3 _ 127.0|Bi 3 455,456 3 184 _ 982.0|Ro 3 457 184 255|Ro 3 461 255 308|Ro 3 462 308 957|Ro 3 482 957 956|Bi 3 483,63 956 511|Ro 3 64 511 981 -520.5|Ro 3 73 981 982 -210.0|Bi 3 83,65 982 512 -545.5`
  .split("|")
  .map((r) => r.split(" ").map((c) => (c === "_" ? "" : c)));
const BOLD = [1, 11, 13];

function ComponentTable() {
  const hd = "border-r border-b border-[#a9a9a9] bg-[#e6e6e6] p-0 text-center font-normal leading-[8px]";
  const h2 = "overflow-hidden border-r border-[#a9a9a9] bg-[#f2f2f2] p-0 text-center font-normal whitespace-nowrap";
  return (
    <table className="h-full w-[376px] table-fixed border-separate border-spacing-0 font-['Liberation_Sans',sans-serif] text-[7px] leading-[9px] text-[#222]">
      <colgroup>
        <col className="w-[30px]" /><col className="w-[81px]" /><col className="w-[35px]" /><col className="w-[31px]" /><col className="w-[31px]" /><col className="w-[31px]" /><col className="w-[39px]" /><col className="w-[38px]" /><col className="w-[60px]" />
      </colgroup>
      <thead>
        <tr className="h-[9px]">
          <th rowSpan={3} className="border-r border-b border-[#999] bg-[#f0f0f0] p-0 pt-3 text-center font-normal">Nr.</th>
          {"ABCDEFGH".split("").map((l) => (
            <th key={l} scope="col" className={l === "A" ? "border-r border-b border-[#777] bg-[#3399ff] p-0 text-center leading-[8px] font-normal text-white" : hd}>{l}</th>
          ))}
        </tr>
        <tr className="h-[11px]">
          <th className={h2}>Komponenten-</th><th className={h2}>Rohrleitung</th><th className={h2}>Stab</th>
          <th className={h2} colSpan={2}>Knoten Nr.</th><th className={h2} colSpan={3}>Projizierte Längen [mm]</th>
        </tr>
        <tr className="h-[10px]">
          {["typ", "Nr.", "Nr.", "Anfang", "Ende", "ΔX [mm]", "ΔY [mm]", "ΔZ [mm]"].map((t, i) => (
            <th key={i} className={`${h2} border-b`}>{t}</th>
          ))}
        </tr>
      </thead>
      <tbody>
        {ROWS.map(([k, b, c, d, e, f = "", g = ""], i) => {
          const n = i + 1;
          const cell = `border-r border-b border-[#b8b8b8] p-0 ${n === 29 ? "bg-[#e6e6e6]" : ""}`;
          return (
            <tr key={n}>
              <th scope="row" className={`border-r border-b border-[#8f8f8f] p-0 text-center font-normal ${n === 1 ? "bg-[#3399ff] text-white" : "bg-[#e2e2e2] text-[#333]"}`}>{n}</th>
              <td className={`${cell} ${n === 1 ? "outline outline-[#555]" : ""}`}>
                <div className="flex items-center gap-[3px]">
                  <span className={`h-[9px] w-2 shrink-0 border border-[#555]/60 ${KIND[k][1]}`} />
                  <span className={BOLD.includes(n) ? "font-bold text-black" : ""}>{KIND[k][0]}</span>
                </div>
              </td>
              <td className={`border-r border-b border-[#b8b8b8] p-0 text-center text-[#555] ${n === 29 ? "bg-[#dcdcdc]" : "bg-[#f0f0f0]"}`}>{b}</td>
              <td className={`${cell} text-center`}>{c}</td>
              <td className={`${cell} text-center`}>{d}</td>
              <td className={`${cell} text-center`}>{e}</td>
              <td className={`${cell} pr-[2px] text-right`}>{f}</td>
              <td className={`${cell} text-right`}>{g}</td>
              <td className={cell} />
            </tr>
          );
        })}
      </tbody>
    </table>
  );
}

function TableDock() {
  return (
    <aside className="flex w-[324px] shrink-0 flex-col bg-[#d5d9e2] pl-1">
      <DockTitle>7.4 Komponenten</DockTitle>
      <div role="toolbar" className="mt-px flex h-[17px] shrink-0 items-center bg-linear-to-b from-[#f3f5f9] to-[#d9dde7] pl-1">
        <Tools items="t1 t2 t3 t4 t5 *t6 | t7 t8 | *t9 *t10 t11 | t12 t13 t14 | t15 | t16 t17 t18 | t19" />
      </div>
      <div className="flex min-h-0 flex-1 flex-col border-t border-l border-[#7d7d7d] bg-[#f0f0f0]">
        <div className="flex min-h-0 flex-1 pr-[2px]">
          <div className="min-w-0 flex-1 overflow-hidden bg-white"><ComponentTable /></div>
          <div className="flex w-[10px] shrink-0 flex-col items-center">
            <ChevronUp className="my-[2px] size-[10px] text-[#444]" strokeWidth={3} />
            <div className="h-[144px] w-full bg-[#cdcdcd]" />
            <ChevronDown className="mt-auto size-[10px] text-[#444]" strokeWidth={3} />
          </div>
        </div>
        <div className="mt-1 flex h-3 shrink-0 items-center pr-px">
          <ChevronLeft className="size-[11px] text-[#444]" strokeWidth={3} />
          <div className="h-full w-[146px] bg-[#cdcdcd]" />
          <ChevronRight className="ml-auto size-[10px] text-[#444]" strokeWidth={3} />
        </div>
        <div className="mt-[2px] flex h-[21px] shrink-0 items-start justify-between border-t border-[#8f8f8f] font-['Liberation_Sans',sans-serif] text-[7px]">
          <div role="tablist" className="flex gap-px">
            {["Materialien", "Querschnitte", "Rohrleitungen", "Komponenten", "Biegungen"].map((t) => (
              <button
                key={t}
                role="tab"
                type="button"
                aria-selected={t === "Komponenten"}
                className={`h-[10px] rounded-b-sm border-r border-b border-l px-[2px] leading-[9px] ${t === "Komponenten" ? "border-[#8f8f8f] bg-white" : "border-[#777] bg-[#e4e4e4]"}`}
              >
                {t}
              </button>
            ))}
          </div>
          <div className="flex">
            {["M3 1V7M8 1L4 4L8 7Z", "M7 1L3 4L7 7Z", "M3 1L7 4L3 7Z", "M2 1L6 4L2 7ZM7 1V7"].map((d, i) => (
              <button key={d} type="button" aria-label={`Blatt ${i + 1}`} className="flex h-[10px] w-[10px] items-center justify-center border-r border-[#999]">
                <svg viewBox="0 0 10 8" className="h-[5px] w-[7px]"><path d={d} fill={i < 2 ? "#aaa" : "#000"} stroke={i < 2 ? "#aaa" : "#000"} /></svg>
              </button>
            ))}
          </div>
        </div>
      </div>
    </aside>
  );
}

/* ---------- frame ---------- */
const MENU = [["", "D", "atei"], ["Bearbeite", "n", ""], ["", "A", "nsicht"], ["", "E", "infügen"], ["Be", "r", "echnung"], ["Er", "g", "ebnisse"], ["E", "x", "tras"], ["", "T", "abelle"], ["", "O", "ptionen"], ["", "Z", "usatzmodule"], ["", "F", "enster"], ["", "H", "ilfe"]];

const STATUS = [["FANG", "w-[23px]"], ["RASTER", "w-[30px]"], ["POLAR", "w-[34px]"], ["OFANG", "w-[28px]"], ["HLINIEN", "w-[31px]"], ["DXF", "w-[18px]"]];

export default function App() {
  return (
    <div className="flex h-screen flex-col overflow-hidden bg-[#ced2db] font-['Roboto','Open_Sans',sans-serif] text-[8px] text-[#222]">
      <header className="flex h-4 shrink-0 items-center bg-[#0078d7] pr-[14px] pl-[2px] text-white">
        <svg viewBox="0 0 12 12" className="size-3 shrink-0" aria-hidden="true">
          <circle cx="6" cy="6" r="4.500" fill="#8c7a58" /><path d="M2 3L7 1L10 5L6 7Z" fill="#d8b64c" /><path d="M2 8L5 5L9 10L4 11Z" fill="#2f4a78" /><circle cx="7" cy="6" r="1.500" fill="#1c2c48" />
        </svg>
        <h1 className="ml-px flex-1">RFEM 5.07.12 x64 - [Prague Piping-en]</h1>
        <div className="flex items-center gap-6">
          <button type="button" aria-label="Minimieren"><Minus className="size-2" /></button>
          <button type="button" aria-label="Wiederherstellen"><Copy className="size-2 -scale-x-100" strokeWidth={3} /></button>
          <button type="button" aria-label="Schließen"><X className="size-2" strokeWidth={3} /></button>
        </div>
      </header>

      <nav className="flex h-4 shrink-0 items-center pr-1 pl-[2px] font-['Open_Sans',sans-serif] text-[7px] text-[#4b505c]">
        <span className="mr-px h-[9px] border-l border-dotted border-[#8d95a4]" />
        <Icon name="rfem" className="mr-[7px] size-[11px]" />
        <div className="flex flex-1 gap-2">
          {MENU.map(([a, u, b]) => (
            <button key={a + u + b} type="button">{a}<u>{u}</u>{b}</button>
          ))}
        </div>
        <div className="flex items-center gap-[5px] text-[#777]">
          <button type="button" aria-label="Fenster minimieren"><Minus className="size-[6px]" /></button>
          <button type="button" aria-label="Fenster wiederherstellen"><Copy className="size-[6px]" /></button>
          <button type="button" aria-label="Fenster schließen"><X className="size-[6px]" /></button>
        </div>
      </nav>

      <div className="flex h-[17px] shrink-0">
        <Strip>
          <Tools items="new open caseBrown caseBlue save clip print preview | undo redo | plate ellipse target selBox layer | *gridDark *gridLight | loadNew" />
          <div className="mx-[2px] grid h-[13px] w-[116px] shrink-0 grid-cols-[1fr_9px] items-center bg-white">
            <select aria-label="Lastfall" defaultValue="lf1" className="col-span-2 col-start-1 row-start-1 h-full w-full appearance-none pl-[2px] font-['Open_Sans',sans-serif] text-[7px] text-black">
              <option value="lf1">LF1 - Eigengewicht</option>
            </select>
            <span className="pointer-events-none col-start-2 row-start-1 flex h-full items-center justify-center bg-[#e2e5ec]">
              <svg viewBox="0 0 4 2" className="h-[2px] w-1"><path d="M0 0H4L2 2Z" fill="#555" /></svg>
            </span>
          </div>
          <Tools items="prev next lamp valGray eye valBeam | calc calcTab ruler" />
        </Strip>
        <Strip className="ml-[2px]">
          <Tools items="ladder snow *nodesA nodesB nodesC nodesD tag | path rot mirror redX info docMag cubes" />
        </Strip>
        <Strip className="ml-[2px]"><Tools items="photo photo2 pdf pdf2" /></Strip>
      </div>
      <div className="flex h-[18px] shrink-0 pb-px">
        <Strip>
          <Tools items="node v line memb v poly v | support suppLine suppSurf | dim v dim2 gridHash | surf v opening v solid v box boxSun v | beams v loadN loadM loadM loadG loadBox v" />
        </Strip>
        <Strip className="ml-[3px]">
          <Tools items="hand zoomWin zoomX wire wire2 | ax ay az axn v pick v | globe v" />
        </Strip>
        <Strip className="ml-[3px]">
          <Tools items="frameG label | isoA rainbow cubeG cross slope four v isoB fourG | *result result2 v flag v" />
        </Strip>
      </div>

      <main className="flex min-h-0 flex-1">
        <Navigator />
        <div className="relative min-w-0 flex-1 overflow-hidden border-t border-l border-[#7f8591] bg-white">
          <Model />
          <Palette />
          <LegendPanel />
        </div>
        <TableDock />
      </main>

      <footer className="flex h-4 shrink-0 items-center border-t border-[#f4f5f8] bg-linear-to-b from-[#a6acb8] to-[#bcc2cc] font-['Liberation_Sans',sans-serif] text-[7px] text-[#333]">
        <div className="flex-1" />
        <div className="flex gap-[2px]">
          {STATUS.map(([t, w]) => (
            <button
              key={t}
              type="button"
              className={`h-[13px] ${w} ${t === "RASTER" ? "border-t border-l border-[#e4e6ea] bg-[#b7bcc6]" : "border-t border-r border-l border-t-[#555] border-r-[#ddd] border-l-[#555] bg-[#aeb3bd]"}`}
            >
              {t}
            </button>
          ))}
        </div>
        <div className="ml-[82px] flex h-full divide-x divide-[#969ca8] border-l border-[#969ca8]">
          <span className="w-12" /><span className="w-10" /><span className="w-10" /><span className="w-10" />
        </div>
      </footer>
    </div>
  );
}
